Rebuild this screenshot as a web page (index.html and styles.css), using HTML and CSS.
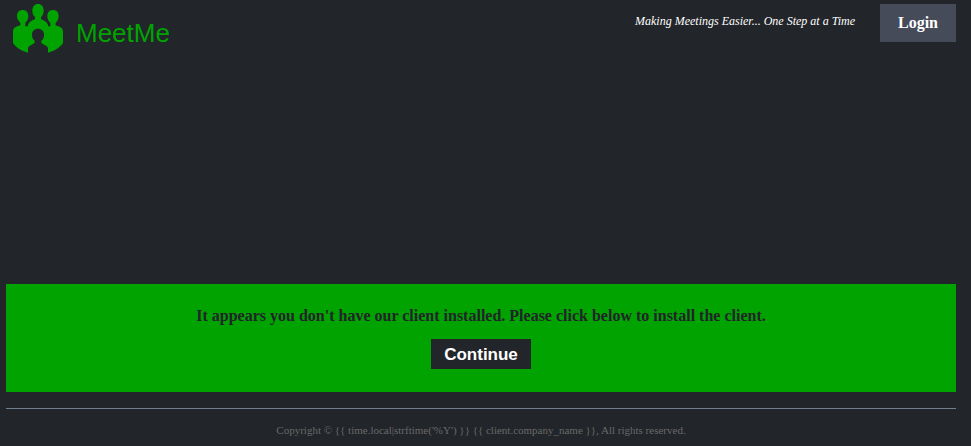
FILE: index.html
```html
<!DOCTYPE html>
<html lang="en">
<head>
<meta charset="utf-8">
<meta name="viewport" content="width=device-width, initial-scale=1">
<title>MeetMe</title>
<link rel="stylesheet" href="styles.css">
</head>
<body>
<header class="header">
  <a class="brand" href="#">
    <svg class="brand-icon" viewBox="0 0 150 147" aria-hidden="true">
      <path class="people" d="M58 20C58 7 65 0 75 0S92 7 92 20C92 29 88 36 84 39V44C87 48 99 49 105 62V67H112V56C107 53 103 45 103 36C103 24 110 18 120 18S137 24 137 36C137 45 133 53 128 56V64C137 67 150 70 150 82V117C139 133 122 142 105 146V133C103 124 91 122 85 117V110C90 107 93 100 93 92C93 81 86 74 75 74S57 81 57 92C57 100 60 107 65 110V117C59 122 47 124 45 133V146C28 142 11 133 0 117V82C0 70 13 67 22 64V56C17 53 12 45 12 36C12 24 19 18 29 18S46 24 46 36C46 45 42 53 37 56V67H45V62C51 49 63 48 66 44V39C62 36 58 29 58 20Z"/>
    </svg>
    <span class="brand-name">MeetMe</span>
  </a>
  <div class="actions">
    <em class="tagline">Making Meetings Easier... One Step at a Time</em>
    <a class="login" href="#">Login</a>
  </div>
</header>
<main class="main">
  <section class="notice">
    <h1 class="notice-title">It appears you don't have our client installed. Please click below to install the client.</h1>
    <button class="continue" type="button">Continue</button>
  </section>
</main>
<footer class="footer">Copyright © {{ time.local|strftime('%Y') }} {{ client.company_name }}, All rights reserved.</footer>
</body>
</html>
```
FILE: styles.css
```css
* {
  box-sizing: border-box;
}

body {
  display: flex;
  flex-direction: column;
  min-height: 100vh;
  margin: 0;
  padding: 4px 15px 0 6px;
  background: #222529;
  font-family: "Liberation Serif", "Times New Roman", serif;
}

.header {
  display: flex;
  justify-content: space-between;
  align-items: flex-start;
}

.brand {
  display: flex;
  gap: 13px;
  padding-left: 7px;
  color: #00a300;
  text-decoration: none;
}

.brand-icon {
  width: 50px;
  height: 49px;
}

.people {
  fill: #00a300;
}

.brand-name {
  padding-top: 14px;
  font: 26px/30px "Liberation Sans", Arial, sans-serif;
}

.actions {
  display: flex;
  gap: 25px;
}

.tagline {
  padding-top: 9px;
  color: #fff;
  font-size: 12px;
  line-height: 16px;
}

.login {
  padding: 10px 18px;
  background: #454b59;
  color: #fff;
  font-size: 16px;
  font-weight: bold;
  line-height: 18px;
  text-decoration: none;
}

.main {
  display: flex;
  flex: 1;
  flex-direction: column;
  justify-content: flex-end;
}

.notice {
  padding: 23px 16px;
  background: #00a300;
  text-align: center;
}

.notice-title {
  margin: 0 0 14px;
  color: #222529;
  font-size: 16px;
  line-height: 18px;
}

.continue {
  display: block;
  margin: 0 auto;
  padding: 6px 13px 4px;
  border: 0;
  background: #222529;
  color: #fff;
  font: bold 17px/20px "Liberation Sans", Arial, sans-serif;
}

.footer {
  margin-top: 16px;
  padding: 14px 0 8px;
  border-top: 1px solid #708090;
  color: #696969;
  font-size: 11px;
  line-height: 15px;
  text-align: center;
}
```
